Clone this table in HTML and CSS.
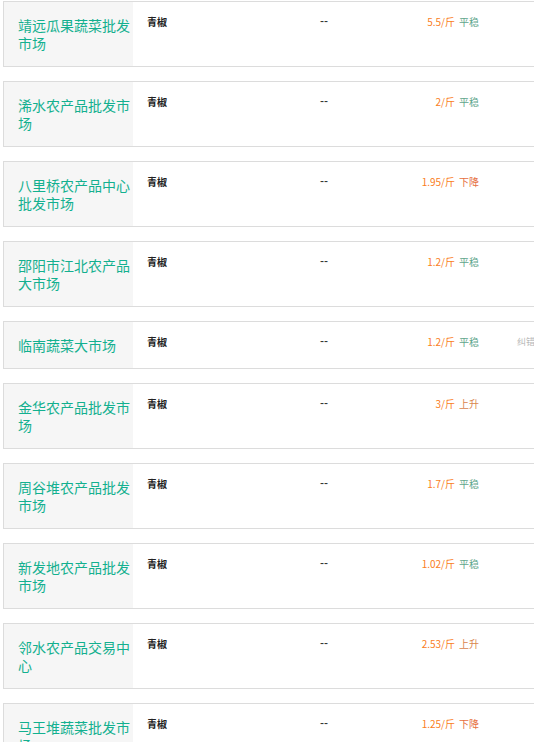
FILE: index.html
```html
<!DOCTYPE html>
<html lang="zh-CN">
<head>
<meta charset="utf-8">
<title>青椒价格</title>
<link rel="stylesheet" href="styles.css">
</head>
<body>
<div class="list">
  <div class="card">
    <div class="name">靖远瓜果蔬菜批发市场</div>
    <div class="product">青椒</div>
    <div class="dash">--</div>
    <div class="price">5.5/斤</div>
    <div class="trend flat">平稳</div>
    <div class="fix"></div>
  </div>
  <div class="card">
    <div class="name">浠水农产品批发市场</div>
    <div class="product">青椒</div>
    <div class="dash">--</div>
    <div class="price">2/斤</div>
    <div class="trend flat">平稳</div>
    <div class="fix"></div>
  </div>
  <div class="card">
    <div class="name">八里桥农产品中心批发市场</div>
    <div class="product">青椒</div>
    <div class="dash">--</div>
    <div class="price">1.95/斤</div>
    <div class="trend down">下降</div>
    <div class="fix"></div>
  </div>
  <div class="card">
    <div class="name">邵阳市江北农产品大市场</div>
    <div class="product">青椒</div>
    <div class="dash">--</div>
    <div class="price">1.2/斤</div>
    <div class="trend flat">平稳</div>
    <div class="fix"></div>
  </div>
  <div class="card">
    <div class="name">临南蔬菜大市场</div>
    <div class="product">青椒</div>
    <div class="dash">--</div>
    <div class="price">1.2/斤</div>
    <div class="trend flat">平稳</div>
    <div class="fix">纠错</div>
  </div>
  <div class="card">
    <div class="name">金华农产品批发市场</div>
    <div class="product">青椒</div>
    <div class="dash">--</div>
    <div class="price">3/斤</div>
    <div class="trend up">上升</div>
    <div class="fix"></div>
  </div>
  <div class="card">
    <div class="name">周谷堆农产品批发市场</div>
    <div class="product">青椒</div>
    <div class="dash">--</div>
    <div class="price">1.7/斤</div>
    <div class="trend flat">平稳</div>
    <div class="fix"></div>
  </div>
  <div class="card">
    <div class="name">新发地农产品批发市场</div>
    <div class="product">青椒</div>
    <div class="dash">--</div>
    <div class="price">1.02/斤</div>
    <div class="trend flat">平稳</div>
    <div class="fix"></div>
  </div>
  <div class="card">
    <div class="name">邻水农产品交易中心</div>
    <div class="product">青椒</div>
    <div class="dash">--</div>
    <div class="price">2.53/斤</div>
    <div class="trend up">上升</div>
    <div class="fix"></div>
  </div>
  <div class="card">
    <div class="name">马王堆蔬菜批发市场</div>
    <div class="product">青椒</div>
    <div class="dash">--</div>
    <div class="price">1.25/斤</div>
    <div class="trend down">下降</div>
    <div class="fix"></div>
  </div>
</div>
</body>
</html>
```
FILE: styles.css
```css
html, body {
  margin: 0;
  padding: 0;
  overflow: hidden;
  background: #fff;
}
body {
  font-family: "Noto Sans CJK SC", "Liberation Sans", sans-serif;
  color: #333;
}
.list {
  display: flex;
  flex-direction: column;
  gap: 14px;
  padding: 1px 0 0 3px;
  width: 620px;
}
.card {
  display: grid;
  grid-template-columns: 129px 187px 60px 75px 62px 60px;
  align-items: start;
  border: 1px solid #dcdcdc;
  background: #fff;
}
.name {
  align-self: stretch;
  background: #f6f6f6;
  color: #13b08f;
  font-size: 14px;
  line-height: 18px;
  padding: 14px 2px 14px 14px;
}
.product, .dash, .price, .trend, .fix {
  padding-top: 13px;
  font-size: 10px;
  line-height: 13px;
  white-space: nowrap;
}
.product {
  padding-left: 14px;
  font-weight: bold;
  color: #222;
}
.dash {
  font-family: "Liberation Sans", sans-serif;
  font-size: 12px;
  color: #333;
}
.price {
  text-align: right;
  color: #fa7d22;
}
.trend {
  padding-left: 4px;
}
.trend.flat { color: #5fa68c; }
.trend.down { color: #e6703f; }
.trend.up { color: #d9864e; }
.fix {
  padding-left: 0;
  font-size: 9px;
  color: #b8b8b8;
}
```
